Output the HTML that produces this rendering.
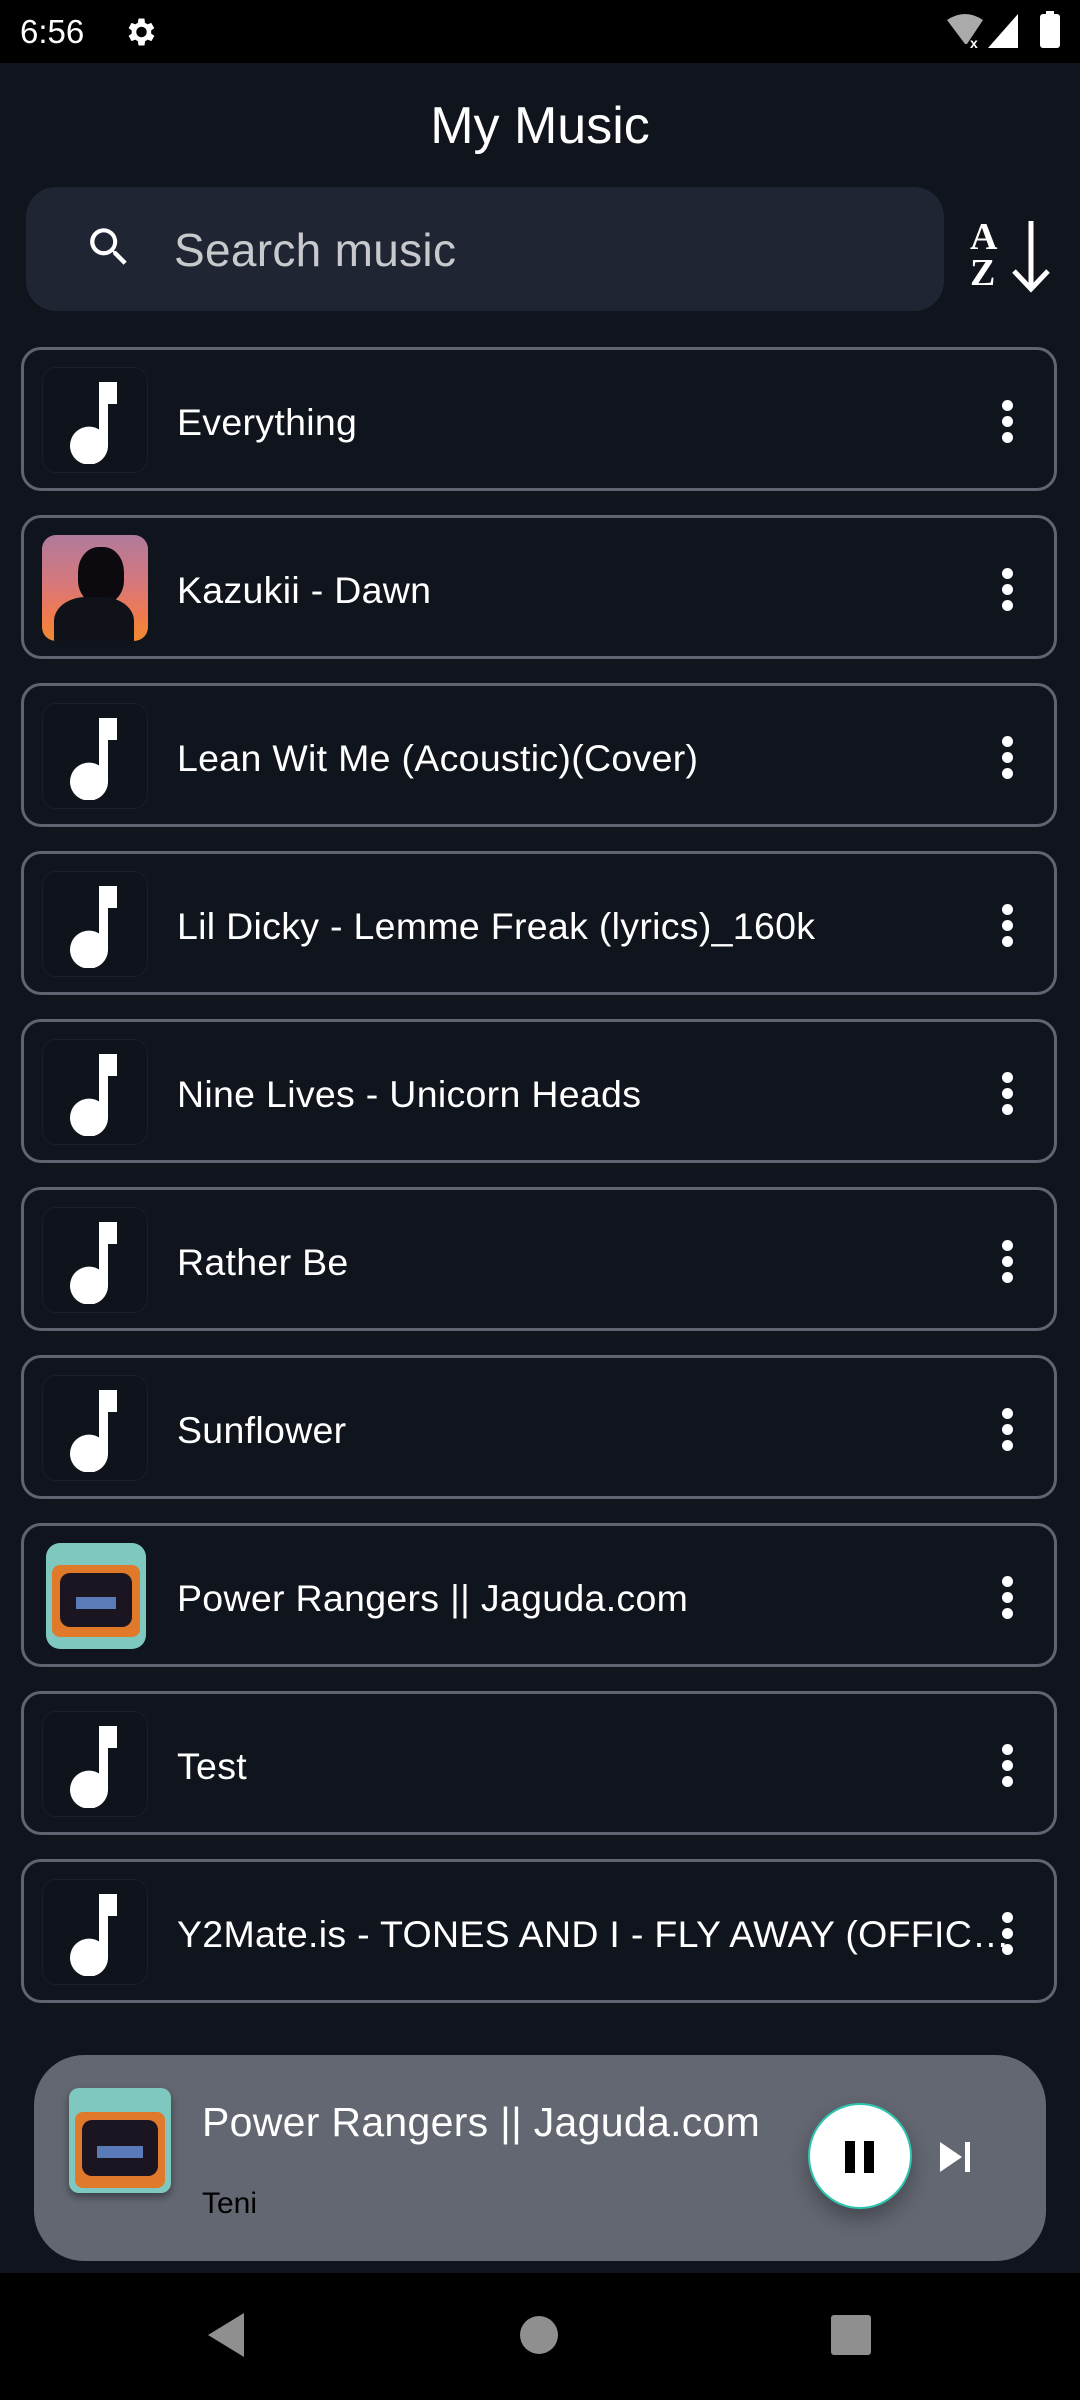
<!DOCTYPE html>
<html><head><meta charset="utf-8"><style>
*{margin:0;padding:0;box-sizing:border-box}
body{width:1080px;height:2400px;background:#10141c;font-family:"Liberation Sans",sans-serif;color:#fff;position:relative;overflow:hidden}
.sb{position:absolute;left:0;top:0;width:1080px;height:63px;background:#000}
.abs{position:absolute}
.row{position:absolute;left:21px;width:1036px;height:144px;border:3px solid #5f6470;border-radius:20px}
.thumb{position:absolute;left:18px;top:17px;width:106px;height:106px;border-radius:14px;background:#0f131b;border:1px solid #1a1f28}
.thumb svg{position:absolute;left:22px;top:14px}
.t{position:absolute;left:153px;top:3px;line-height:138px;font-size:37.5px;letter-spacing:0.3px;white-space:nowrap;width:820px;overflow:hidden;text-overflow:ellipsis}
.dots{position:absolute;left:978px;top:50px;width:12px}
.dots i{display:block;width:11px;height:11px;border-radius:6px;background:#fff;margin-bottom:5px}
</style></head><body>
<div class="sb"></div>
<div class="abs" style="left:20px;top:12px;font-size:33px;line-height:40px">6:56</div>
<svg class="abs" style="left:122px;top:14px" width="36" height="36" viewBox="0 0 24 24"><path fill="#fff" d="M19.4 13a7.5 7.5 0 0 0 0-2l2.1-1.6-2-3.5-2.5 1a7 7 0 0 0-1.7-1L15 3h-4l-.4 2.9a7 7 0 0 0-1.7 1l-2.5-1-2 3.5L6.5 11a7.5 7.5 0 0 0 0 2l-2.1 1.6 2 3.5 2.5-1a7 7 0 0 0 1.7 1L11 21h4l.4-2.9a7 7 0 0 0 1.7-1l2.5 1 2-3.5zM13 15.5a3.5 3.5 0 1 1 0-7 3.5 3.5 0 0 1 0 7z"/></svg>
<svg class="abs" style="left:945px;top:14px" width="40" height="36" viewBox="0 0 40 36"><path fill="#aaa" d="M2 6 Q20 -6 38 6 L22 30 L20 30 Z"/><text x="25" y="34" font-size="14" fill="#fff" font-weight="bold">x</text></svg>
<svg class="abs" style="left:988px;top:14px" width="32" height="34"><path fill="#fff" d="M30 0 V34 H0 Z"/></svg>
<div class="abs" style="left:1040px;top:14px;width:20px;height:34px;background:#fff;border-radius:3px"></div>
<div class="abs" style="left:1046px;top:11px;width:8px;height:4px;background:#fff"></div>

<div class="abs" style="left:0;width:1080px;top:96px;text-align:center;font-size:52px;line-height:60px">My Music</div>
<div class="abs" style="left:26px;top:187px;width:918px;height:124px;background:#1f2533;border-radius:30px"></div>
<svg class="abs" style="left:84px;top:222px" width="50" height="50" viewBox="0 0 24 24"><path fill="#fff" d="M15.5 14h-.8l-.3-.3A6.5 6.5 0 1 0 9.5 16a6.5 6.5 0 0 0 4.2-1.6l.3.3v.8l5 5 1.5-1.5-5-5zm-6 0A4.5 4.5 0 1 1 14 9.5 4.5 4.5 0 0 1 9.5 14z"/></svg>
<div class="abs" style="left:174px;top:222px;font-size:46px;line-height:56px;letter-spacing:0.3px;color:#c8c9cc">Search music</div>
<div class="abs" style="left:970px;top:219px;font-family:'Liberation Serif',serif;font-weight:bold;font-size:38px;line-height:36px;color:#fff">A<br>Z</div>
<svg class="abs" style="left:1008px;top:219px" width="46" height="74" viewBox="0 0 46 74"><path d="M23 2V70M6 52L23 70L40 52" stroke="#fff" stroke-width="5" fill="none"/></svg>

<svg width="0" height="0" style="position:absolute"><defs><g id="note"><path fill="#fff" d="M34 0H52V22H43V64A19 19 0 1 1 34 47.5Z"/></g></defs></svg>

<div class="row" style="top:347px"><div class="thumb"><svg width="62" height="82" viewBox="0 0 62 82"><use href="#note"/></svg></div><div class="t">Everything</div><div class="dots"><i></i><i></i><i></i></div></div>
<div class="row" style="top:515px"><div class="thumb" style="background:linear-gradient(#b07a9c,#d6787c 45%,#ef7a50 75%,#f08a30);overflow:hidden;border:none"><div style="position:absolute;left:36px;top:12px;width:46px;height:56px;border-radius:45% 45% 40% 40%;background:#0c0a0e"></div><div style="position:absolute;left:12px;top:62px;width:80px;height:60px;border-radius:40% 40% 0 0;background:#0f1218"></div></div><div class="t">Kazukii - Dawn</div><div class="dots"><i></i><i></i><i></i></div></div>
<div class="row" style="top:683px"><div class="thumb"><svg width="62" height="82" viewBox="0 0 62 82"><use href="#note"/></svg></div><div class="t">Lean Wit Me (Acoustic)(Cover)</div><div class="dots"><i></i><i></i><i></i></div></div>
<div class="row" style="top:851px"><div class="thumb"><svg width="62" height="82" viewBox="0 0 62 82"><use href="#note"/></svg></div><div class="t">Lil Dicky - Lemme Freak (lyrics)_160k</div><div class="dots"><i></i><i></i><i></i></div></div>
<div class="row" style="top:1019px"><div class="thumb"><svg width="62" height="82" viewBox="0 0 62 82"><use href="#note"/></svg></div><div class="t">Nine Lives - Unicorn Heads</div><div class="dots"><i></i><i></i><i></i></div></div>
<div class="row" style="top:1187px"><div class="thumb"><svg width="62" height="82" viewBox="0 0 62 82"><use href="#note"/></svg></div><div class="t">Rather Be</div><div class="dots"><i></i><i></i><i></i></div></div>
<div class="row" style="top:1355px"><div class="thumb"><svg width="62" height="82" viewBox="0 0 62 82"><use href="#note"/></svg></div><div class="t">Sunflower</div><div class="dots"><i></i><i></i><i></i></div></div>
<div class="row" style="top:1523px"><div class="thumb" style="background:#7fc8c0;overflow:hidden;border:none;left:22px;width:100px"><div style="position:absolute;left:6px;top:22px;width:88px;height:72px;background:#e07a2a;border-radius:8px"></div><div style="position:absolute;left:14px;top:30px;width:72px;height:54px;background:#1a1520;border-radius:10px"></div><div style="position:absolute;left:30px;top:54px;width:40px;height:12px;background:#5a7ab8"></div></div><div class="t">Power Rangers || Jaguda.com</div><div class="dots"><i></i><i></i><i></i></div></div>
<div class="row" style="top:1691px"><div class="thumb"><svg width="62" height="82" viewBox="0 0 62 82"><use href="#note"/></svg></div><div class="t">Test</div><div class="dots"><i></i><i></i><i></i></div></div>
<div class="row" style="top:1859px"><div class="thumb"><svg width="62" height="82" viewBox="0 0 62 82"><use href="#note"/></svg></div><div class="t" style="width:838px">Y2Mate.is - TONES AND I - FLY AWAY (OFFICIAL VIDEO)</div><div class="dots"><i></i><i></i><i></i></div></div>

<div class="abs" style="left:34px;top:2055px;width:1012px;height:206px;background:#636771;border-radius:50px"></div>
<div class="abs" style="left:69px;top:2088px;width:102px;height:105px;background:#7fc8c0;border-radius:10px;overflow:hidden;box-shadow:0 4px 8px rgba(0,0,0,.4)"><div style="position:absolute;left:6px;top:24px;width:90px;height:76px;background:#e07a2a;border-radius:8px"></div><div style="position:absolute;left:13px;top:32px;width:76px;height:56px;background:#1a1520;border-radius:10px"></div><div style="position:absolute;left:28px;top:58px;width:46px;height:12px;background:#5a7ab8"></div></div>
<div class="abs" style="left:202px;top:2097px;font-size:41px;line-height:50px;letter-spacing:0.3px">Power Rangers || Jaguda.com</div>
<div class="abs" style="left:202px;top:2184px;font-size:30px;line-height:40px;color:#000">Teni</div>
<div class="abs" style="left:808px;top:2103px;width:104px;height:106px;border-radius:50%;background:#fff;border:2px solid #2ec4b0;box-shadow:0 10px 20px rgba(0,0,0,.3)"></div>
<div class="abs" style="left:845px;top:2141px;width:10px;height:32px;background:#000"></div>
<div class="abs" style="left:864px;top:2141px;width:10px;height:32px;background:#000"></div>
<svg class="abs" style="left:938px;top:2140px" width="34" height="34" viewBox="0 0 34 34"><path fill="#fff" d="M2 2L24 17L2 32Z"/><rect x="27" y="2" width="5" height="30" fill="#fff"/></svg>

<div class="abs" style="left:0;top:2273px;width:1080px;height:127px;background:#000"></div>
<svg class="abs" style="left:206px;top:2313px" width="40" height="44"><path fill="#8f8f8f" d="M38 0V44L2 22Z"/></svg>
<div class="abs" style="left:520px;top:2316px;width:38px;height:38px;border-radius:50%;background:#8f8f8f"></div>
<div class="abs" style="left:831px;top:2315px;width:40px;height:40px;border-radius:3px;background:#8f8f8f"></div>
</body></html>
